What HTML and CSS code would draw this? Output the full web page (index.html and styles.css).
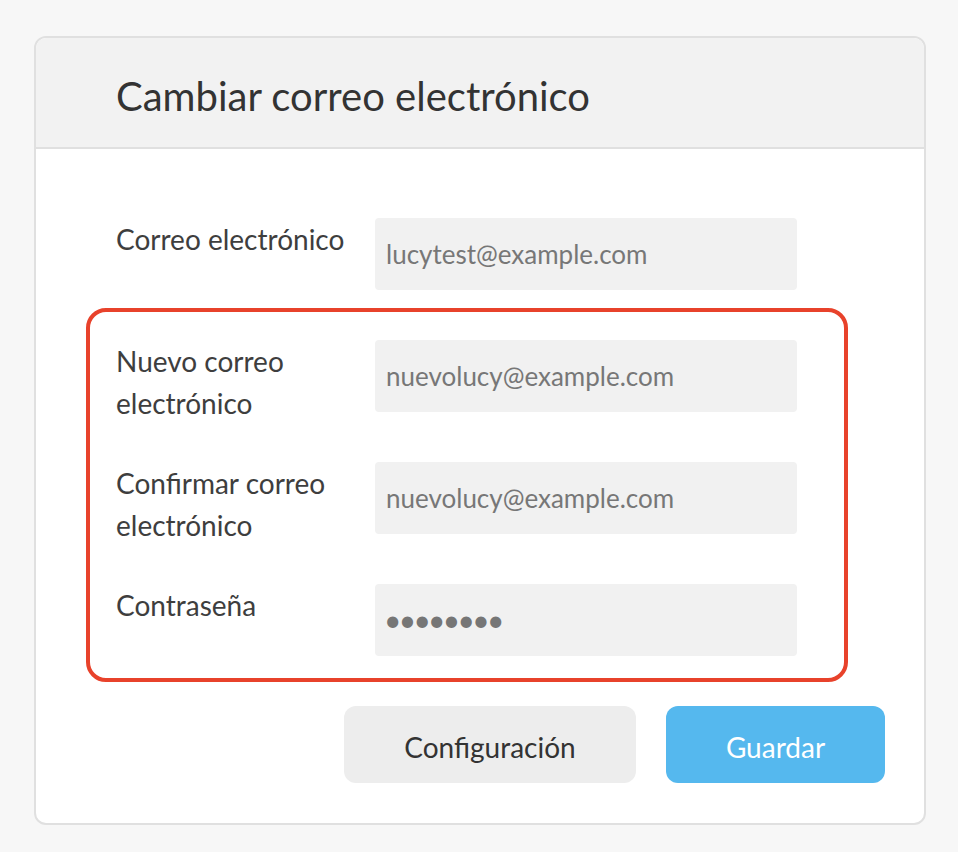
FILE: index.html
```html
<!DOCTYPE html>
<html lang="es">
<head>
<meta charset="utf-8">
<title>Cambiar correo electrónico</title>
<link rel="stylesheet" href="styles.css">
</head>
<body>
<div class="card">
  <div class="card-header">
    <h1 class="title">Cambiar correo electrónico</h1>
  </div>
  <div class="card-body">
    <div class="row">
      <label class="label">Correo electrónico</label>
      <div class="input">lucytest@example.com</div>
    </div>
    <div class="highlight">
      <div class="row">
        <label class="label">Nuevo correo electrónico</label>
        <div class="input">nuevolucy@example.com</div>
      </div>
      <div class="row">
        <label class="label">Confirmar correo electrónico</label>
        <div class="input">nuevolucy@example.com</div>
      </div>
      <div class="row">
        <label class="label">Contraseña</label>
        <div class="input password">••••••••</div>
      </div>
    </div>
    <div class="actions">
      <button class="btn btn-secondary">Configuración</button>
      <button class="btn btn-primary">Guardar</button>
    </div>
  </div>
</div>
</body>
</html>
```

FILE: styles.css
```css
html, body {
  margin: 0;
  padding: 0;
  background: #f7f7f7;
}
body {
  font-family: Lato, "Open Sans", sans-serif;
  padding: 36px 32px 0 34px;
}
.card {
  width: 892px;
  box-sizing: border-box;
  background: #ffffff;
  border: 2px solid #e0e0e0;
  border-radius: 12px;
  overflow: hidden;
}
.card-header {
  background: #f2f2f2;
  border-bottom: 2px solid #e0e0e0;
  height: 111px;
  box-sizing: border-box;
  display: flex;
  align-items: center;
  padding: 7px 0 0 80px;
}
.title {
  margin: 0;
  font-weight: 400;
  font-size: 40px;
  color: #333333;
}
.card-body {
  padding: 69px 39px 40px 80px;
}
.row {
  display: flex;
  align-items: flex-start;
  height: 72px;
}
.label {
  width: 259px;
  flex: none;
  font-size: 28px;
  line-height: 42px;
  color: #3e3e3e;
  padding-right: 20px;
  box-sizing: border-box;
}
.input {
  width: 422px;
  height: 72px;
  box-sizing: border-box;
  background: #f1f1f1;
  border-radius: 4px;
  padding-left: 11px;
  display: flex;
  align-items: center;
  font-size: 26px;
  color: #777777;
}
.password {
  font-size: 30px;
  letter-spacing: -2.7px;
  padding: 0 0 3px 9px;
  color: #767676;
}
.highlight {
  margin: 18px 0 0 -30px;
  width: 762px;
  box-sizing: border-box;
  border: 4px solid #e8422b;
  border-radius: 20px;
  padding: 28px 0 22px 26px;
}
.highlight .row + .row {
  margin-top: 50px;
}
.actions {
  display: flex;
  justify-content: flex-end;
  gap: 30px;
  margin-top: 24px;
}
.btn {
  height: 77px;
  border: none;
  border-radius: 12px;
  font-family: Lato, "Open Sans", sans-serif;
  font-size: 28px;
  padding: 4px 0 0;
  cursor: pointer;
}
.btn-secondary {
  width: 292px;
  background: #ededed;
  color: #333333;
}
.btn-primary {
  width: 219px;
  background: #55b8ee;
  color: #ffffff;
}
```
